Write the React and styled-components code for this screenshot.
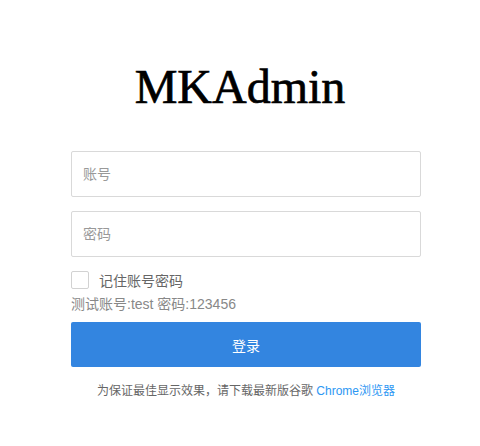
import React from "react";
import styled, { createGlobalStyle } from "styled-components";

const GlobalStyle = createGlobalStyle`
  html, body {
    margin: 0;
    padding: 0;
    background: #fff;
    font-family: "Liberation Sans", Arial, "Noto Sans CJK SC", sans-serif;
  }
`;

const Page = styled.div`
  width: 480px;
  height: 446px;
  display: flex;
  flex-direction: column;
  align-items: center;
`;

const Logo = styled.h1`
  margin: 62px 0 0;
  height: 50px;
  font-family: "Liberation Serif", "Times New Roman", serif;
  font-weight: 400;
  font-size: 48px;
  line-height: 50px;
  color: #000;
  -webkit-text-stroke: 0.7px #000;
`;

const Form = styled.form`
  width: 350px;
  margin: 39px 0 0 12px;
  display: flex;
  flex-direction: column;
`;

const Input = styled.input`
  box-sizing: border-box;
  width: 100%;
  height: 46px;
  margin-bottom: 14px;
  padding: 0 11px;
  border: 1px solid #d9d9d9;
  border-radius: 2px;
  font-size: 14px;
  font-family: inherit;
  color: #333;
  outline: none;
  &::placeholder {
    color: #999;
  }
`;

const Remember = styled.label`
  display: flex;
  align-items: center;
  gap: 10px;
  height: 18px;
  font-size: 14px;
  color: #666;
`;

const Box = styled.span`
  box-sizing: border-box;
  width: 18px;
  height: 18px;
  border: 1px solid #d2d2d2;
  border-radius: 2px;
  background: #fff;
`;

const Hint = styled.div`
  margin-top: 6px;
  font-size: 14px;
  line-height: 18px;
  color: #888;
`;

const Submit = styled.button`
  margin-top: 9px;
  height: 45px;
  border: none;
  border-radius: 2px;
  background: #3385e0;
  color: #fff;
  font-size: 14px;
  font-family: inherit;
  cursor: pointer;
`;

const Footer = styled.p`
  margin: 16px 0 0;
  text-align: center;
  font-size: 12px;
  line-height: 16px;
  color: #666;
  a {
    color: #2d97f3;
    text-decoration: none;
  }
`;

export default function App() {
  return (
    <Page>
      <GlobalStyle />
      <Logo>MKAdmin</Logo>
      <Form onSubmit={(e) => e.preventDefault()}>
        <Input placeholder="账号" />
        <Input type="password" placeholder="密码" />
        <Remember>
          <Box />
          记住账号密码
        </Remember>
        <Hint>测试账号:test 密码:123456</Hint>
        <Submit type="submit">登录</Submit>
        <Footer>
          为保证最佳显示效果，请下载最新版谷歌 <a href="#">Chrome浏览器</a>
        </Footer>
      </Form>
    </Page>
  );
}
